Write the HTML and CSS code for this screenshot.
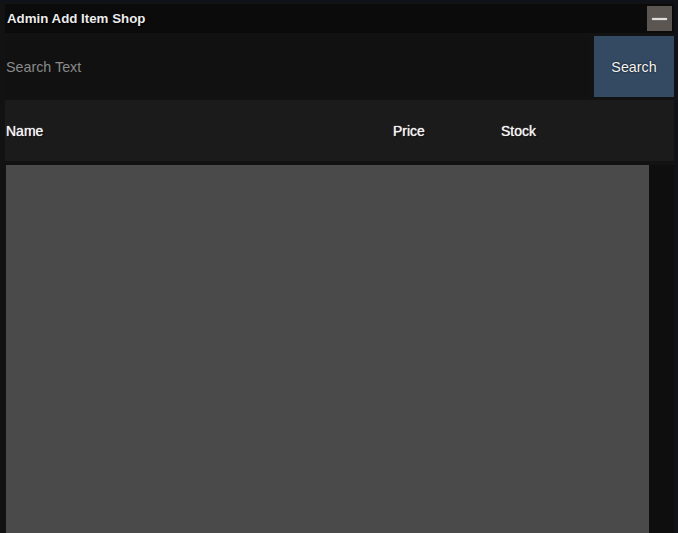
FILE: index.html
```html
<!DOCTYPE html>
<html>
<head>
<meta charset="utf-8">
<link rel="stylesheet" href="styles.css">
</head>
<body>
<div class="window">
  <div class="titlebar">
    <span class="title">Admin Add Item Shop</span>
    <button class="min-btn" aria-label="Minimize"><span class="dash"></span></button>
  </div>
  <div class="search-row">
    <input class="search-input" type="text" placeholder="Search Text">
    <button class="search-btn">Search</button>
  </div>
  <div class="header-row">
    <span class="col">Name</span>
    <span class="col">Price</span>
    <span class="col">Stock</span>
  </div>
  <div class="list-area">
    <div class="list"></div>
    <div class="scrollbar"></div>
  </div>
</div>
</body>
</html>
```
FILE: styles.css
```css
html, body {
  margin: 0;
  padding: 0;
  height: 100%;
  overflow: hidden;
}
body {
  background: #10121a;
  font-family: "Liberation Sans", Arial, sans-serif;
  padding-top: 3px;
  box-sizing: border-box;
}
.window {
  width: 675px;
  height: 530px;
  box-sizing: border-box;
  background: #121212;
  padding: 1px 1px 0 5px;
  display: flex;
  flex-direction: column;
}
.titlebar {
  height: 29px;
  flex: none;
  background: #0b0b0b;
  display: flex;
  align-items: center;
  justify-content: space-between;
  padding-left: 2px;
  padding-right: 2px;
}
.title {
  color: #ececec;
  font-size: 13.3px;
  font-weight: bold;
  text-shadow: 0 0 2px #000, 1px 1px 1px #000;
}
.min-btn {
  width: 25px;
  height: 25px;
  border: none;
  padding: 0;
  background: #5b5652;
  display: flex;
  align-items: center;
  justify-content: center;
}
.dash {
  display: block;
  width: 15px;
  height: 2px;
  background: #dedede;
  border-radius: 1px;
  box-shadow: 0 0 1px #fff;
}
.search-row {
  margin-top: 3px;
  height: 61px;
  flex: none;
  display: flex;
  gap: 4px;
}
.search-input {
  flex: 1;
  background: #111111;
  border: none;
  outline: none;
  padding: 0 1px;
  font-family: "Liberation Sans", Arial, sans-serif;
  font-size: 14.3px;
  color: #ddd;
}
.search-input::placeholder {
  color: #8a8a8a;
}
.search-btn {
  width: 80px;
  border: none;
  background: #344a62;
  color: #f4f4f4;
  font-family: "Liberation Sans", Arial, sans-serif;
  font-size: 14.3px;
  padding: 0;
  text-shadow: 0 0 2px #000;
}
.header-row {
  margin-top: 3px;
  height: 61px;
  flex: none;
  background: #1b1b1b;
  display: grid;
  grid-template-columns: 387px 108px 1fr;
  align-items: center;
  padding-left: 1px;
}
.col {
  color: #f2f2f2;
  font-size: 14px;
  text-shadow: 0 0 1px #fff, 1px 1px 1px #000;
}
.list-area {
  margin-top: 4px;
  flex: 1;
  display: flex;
  padding-left: 1px;
}
.list {
  flex: 1;
  background: #4a4a4a;
}
.scrollbar {
  width: 25px;
  background: #0e0e0e;
}
```
